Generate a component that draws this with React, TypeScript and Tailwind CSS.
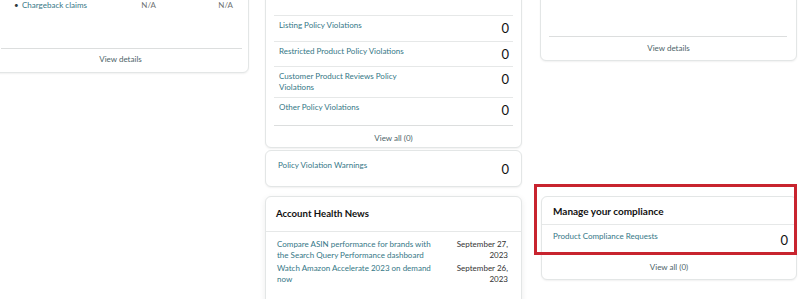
import React from "react";

const font = { fontFamily: "Lato, 'Liberation Sans', Arial, sans-serif" };

const violationRows = [
  { label: "Listing Policy Violations", h: "h-[26px]" },
  { label: "Restricted Product Policy Violations", h: "h-[25px]" },
  { label: "Customer Product Reviews Policy Violations", h: "h-[31px]" },
  { label: "Other Policy Violations", h: "h-[28px]" },
];

const news = [
  { title: "Compare ASIN performance for brands with the Search Query Performance dashboard", date: "September 27, 2023" },
  { title: "Watch Amazon Accelerate 2023 on demand now", date: "September 26, 2023" },
];

const Card = ({ className = "", children }: { className?: string; children: React.ReactNode }) => (
  <div className={"bg-white border border-[#e3e6e6] rounded-[6px] shadow-[0_1px_2px_rgba(0,0,0,0.06)] " + className}>
    {children}
  </div>
);

export default function App() {
  return (
    <div className="relative w-[800px] h-[299px] overflow-hidden bg-white text-[#0f1111]" style={font}>
      <div className="flex items-start">
        {/* left column */}
        <div className="w-[257px] ml-[-8px] mr-[16px] shrink-0">
          <Card className="mt-[-20px]">
            <div className="pt-[18px] flex items-center h-[30px] text-[8px] leading-[12px] pr-[15px]">
              <span className="pl-[21px] w-[29px] text-[#2f3a3c]">•</span>
              <span className="flex-1 text-[#357786]">Chargeback claims</span>
              <span className="text-[#6f7373] text-right">N/A</span>
              <span className="w-[77px] text-[#6f7373] text-right">N/A</span>
            </div>
            <div className="mt-[37px] ml-[8px] mr-[6px] border-t border-[#dcdede]" />
            <div className="pt-[4px] pb-[7px] text-center text-[8px] leading-[12px] text-[#4d6469]">View details</div>
          </Card>
        </div>

        {/* middle column */}
        <div className="w-[257px] shrink-0 mr-[18px]">
          <Card className="mt-[-20px]">
            <div className="h-[34px] flex justify-end items-end pr-[12px] pb-[13px]">
              <span className="text-[13px] leading-[14px] text-[#111]">0</span>
            </div>
            <div className="mx-[8px]">
              {violationRows.map((r, i) => (
                <div key={i} className={"flex justify-between items-start border-t border-[#e6e8e8] pl-[5px] pr-[4px] " + r.h}>
                  <span className="pt-[4px] max-w-[140px] text-[8px] leading-[11px] text-[#357786]">{r.label}</span>
                  <span className="pt-[5px] text-[13px] leading-[14px] text-[#111]">0</span>
                </div>
              ))}
              <div className="border-t border-[#dcdede] pt-[6px] pb-[3px] text-center text-[8px] leading-[12px] text-[#4d6469]">
                View all (0)
              </div>
            </div>
          </Card>

          <Card className="mt-[2px] h-[37px] flex justify-between items-start px-[12px]">
            <span className="pt-[9px] text-[8px] leading-[11px] text-[#357786]">Policy Violation Warnings</span>
            <span className="pt-[11px] text-[13px] leading-[14px] text-[#111]">0</span>
          </Card>

          <Card className="mt-[9px] h-[140px] shadow-[0_2px_6px_rgba(0,0,0,0.08)]">
            <div className="h-[35px] border-b border-[#e6e8e8] pt-[10px] pl-[10px] text-[9.6px] leading-[14px] font-bold text-[#111]">
              Account Health News
            </div>
            <div className="pt-[7px] pl-[11px] pr-[13px] flex flex-col gap-[2px]">
              {news.map((n, i) => (
                <div key={i} className="flex justify-between items-start gap-[12px] text-[8px] leading-[11px]">
                  <span className="flex-1 text-[#357786]">{n.title}</span>
                  <span className="w-[56px] text-right text-[#333]">{n.date}</span>
                </div>
              ))}
            </div>
          </Card>
        </div>

        {/* right column */}
        <div className="w-[257px] shrink-0">
          <Card className="mt-[-20px]">
            <div className="h-[55px]" />
            <div className="ml-[8px] mr-[9px] border-t border-[#dcdede]" />
            <div className="pt-[5px] pb-[6px] text-center text-[8px] leading-[12px] text-[#4d6469]">View details</div>
          </Card>

          <Card className="mt-[135px] ml-[1px]">
            <div className="h-[28px] border-b border-[#e6e8e8] pt-[7px] pl-[11px] text-[10px] leading-[14px] font-bold text-[#111]">
              Manage your compliance
            </div>
            <div className="h-[29px] flex justify-between items-start pl-[11px] pr-[8px] border-b border-[#e6e8e8]">
              <span className="pt-[6px] text-[8px] leading-[11px] text-[#357786]">Product Compliance Requests</span>
              <span className="pt-[8px] text-[13px] leading-[14px] text-[#111]">0</span>
            </div>
            <div className="pt-[7px] pb-[6px] text-center text-[8px] leading-[12px] text-[#4d6469]">View all (0)</div>
          </Card>
        </div>
      </div>

      {/* highlight annotation */}
      <div className="absolute left-[534px] top-[184px] w-[263px] h-[71px] border-[3px] border-[#c8242f]" />
    </div>
  );
}
